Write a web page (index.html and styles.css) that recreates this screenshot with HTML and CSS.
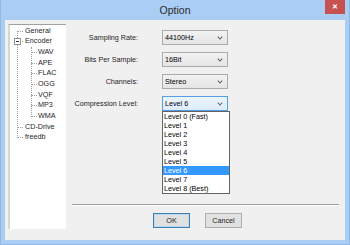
FILE: index.html
```html
<!DOCTYPE html>
<html lang="en">
<head>
    <meta charset="UTF-8">
    <title>Option</title>
    <link rel="stylesheet" href="styles.css">
</head>
<body>
<div class="window">
    <div class="titlebar">
        <span class="title">Option</span>
        <span class="close">&#x2715;</span>
    </div>
    <div class="client">
        <div class="tree">
            <ul class="root">
                <li>General</li>
                <li><span class="box"></span>Encoder
                    <ul class="sub">
                        <li>WAV</li>
                        <li>APE</li>
                        <li>FLAC</li>
                        <li>OGG</li>
                        <li>VQF</li>
                        <li>MP3</li>
                        <li>WMA</li>
                    </ul>
                </li>
                <li>CD-Drive</li>
                <li>freedb</li>
            </ul>
        </div>
        <div class="main">
            <div class="form">
                <label>Sampling Rate:</label>
                <div class="combo">44100Hz<span class="arrow"></span></div>
                <label>Bits Per Sample:</label>
                <div class="combo">16Bit<span class="arrow"></span></div>
                <label>Channels:</label>
                <div class="combo">Stereo<span class="arrow"></span></div>
                <label>Compression Level:</label>
                <div class="combo open">Level 6<span class="arrow"></span>
                    <ul class="list">
                        <li>Level 0 (Fast)</li>
                        <li>Level 1</li>
                        <li>Level 2</li>
                        <li>Level 3</li>
                        <li>Level 4</li>
                        <li>Level 5</li>
                        <li class="sel">Level 6</li>
                        <li>Level 7</li>
                        <li>Level 8 (Best)</li>
                    </ul>
                </div>
            </div>
            <hr class="sep">
            <div class="buttons">
                <button class="btn default">OK</button>
                <button class="btn">Cancel</button>
            </div>
        </div>
    </div>
</div>
</body>
</html>
```
FILE: styles.css
```css
body {
    margin: 0;
    font-family: "Liberation Sans", Arial, sans-serif;
    font-size: 7.2px;
    color: #000;
}
.window {
    width: 350px;
    height: 245px;
    box-sizing: border-box;
    background: #aacdf3;
    border: 1px solid #8fb8e8;
    border-top: none;
}
.titlebar {
    height: 20px;
    display: flex;
    justify-content: center;
    align-items: center;
    position: relative;
}
.title {
    font-size: 10.5px;
    color: #2b2b2b;
}
.close {
    position: absolute;
    top: 0;
    right: 4px;
    width: 20px;
    height: 14px;
    background: #c75050;
    color: #fff;
    font-size: 7px;
    font-weight: bold;
    display: flex;
    align-items: center;
    justify-content: center;
}
.client {
    margin: 0 4px;
    height: 220px;
    background: #f0f0f0;
    display: flex;
    align-items: flex-start;
    padding: 4px 6px 0 3px;
    box-sizing: border-box;
}
.tree {
    width: 58px;
    height: 205px;
    box-sizing: border-box;
    background: #fff;
    border-left: 2px solid #d6d6d6;
    border-top: 1px solid #a0a0a0;
    flex-shrink: 0;
}
.tree ul {
    list-style: none;
    margin: 0;
    padding: 0;
    position: relative;
}
.tree li {
    position: relative;
    line-height: 10.7px;
    height: 10.7px;
    color: #1e1e1e;
}
.tree li:has(.sub) {
    height: auto;
}
.root {
    margin-top: 0.5px !important;
}
.root > li {
    padding-left: 15px;
}
.sub > li {
    padding-left: 13px;
    margin-left: -15px;
    padding-left: 28px;
}
.root::before,
.sub::before {
    content: "";
    position: absolute;
    border-left: 1px dotted #a0a0a0;
}
.root::before {
    left: 7px;
    top: 5px;
    bottom: 5px;
}
.sub::before {
    left: 6px;
    top: 0;
    bottom: 5px;
}
.tree li::before {
    content: "";
    position: absolute;
    top: 5px;
    width: 6px;
    border-top: 1px dotted #a0a0a0;
}
.root > li::before {
    left: 7px;
}
.sub > li::before {
    left: 21px;
}
.box {
    position: absolute;
    left: 4px;
    top: 2px;
    width: 5px;
    height: 5px;
    border: 1px solid #919191;
    background: #fff;
    z-index: 1;
}
.box::after {
    content: "";
    position: absolute;
    left: 1px;
    top: 2px;
    width: 3px;
    border-top: 1px solid #333;
}
.main {
    margin-left: 6px;
    flex: 1;
    height: 204px;
    display: flex;
    flex-direction: column;
}
.form {
    display: grid;
    grid-template-columns: 66px 66px;
    grid-auto-rows: 15px;
    column-gap: 24px;
    row-gap: 7px;
    padding-top: 6px;
    align-items: center;
}
.form label {
    text-align: right;
    color: #1e1e1e;
}
.combo {
    position: relative;
    height: 15px;
    box-sizing: border-box;
    border: 1px solid #acacac;
    background: linear-gradient(#f2f2f2, #e5e5e5);
    padding-left: 2px;
    line-height: 13px;
}
.combo.open {
    border-color: #569de5;
    background: linear-gradient(#ecf4fc, #dcecfc);
}
.arrow {
    position: absolute;
    right: 5px;
    top: 5px;
    width: 3px;
    height: 3px;
    border-right: 1px solid #555;
    border-bottom: 1px solid #555;
    transform: rotate(45deg) scale(0.9);
    top: 3.5px;
}
.list {
    position: absolute;
    left: -1px;
    top: 14px;
    width: 66px;
    margin: 0;
    padding: 0;
    list-style: none;
    background: #fff;
    border: 1px solid #646464;
    z-index: 2;
}
.list li {
    height: 9px;
    line-height: 9px;
    padding-left: 1px;
}
.list li.sel {
    background: #3399ff;
    color: #fff;
}
.sep {
    margin: auto 0 7px;
    border: none;
    border-top: 1px solid #a0a0a0;
    border-bottom: 1px solid #fff;
    height: 0;
}
.buttons {
    display: flex;
    gap: 15px;
    padding-left: 81px;
}
.btn {
    width: 37px;
    height: 15px;
    padding: 0;
    font-family: inherit;
    font-size: 7.2px;
    color: #1e1e1e;
    background: #e1e1e1;
    border: 1px solid #adadad;
}
.btn.default {
    border-color: #3c7fb1;
    box-shadow: inset 0 0 0 1px #bcd8f2;
}
```
